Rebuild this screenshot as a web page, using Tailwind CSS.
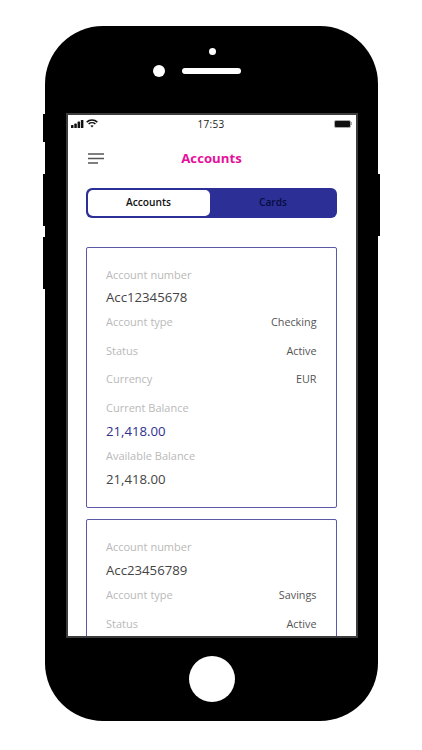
<!DOCTYPE html>
<html lang="en">
<head>
    <meta charset="UTF-8">
    <meta name="viewport" content="width=device-width, initial-scale=1.0">
    <title>Accounts</title>
    <script src="https://cdn.jsdelivr.net/npm/@tailwindcss/browser@4"></script>
</head>
<body class="bg-white font-['Open_Sans',sans-serif] overflow-hidden">
    <div class="h-[750px] w-[422px] pt-[26px] pl-[45px]">
        <!-- phone body -->
        <div class="relative w-[333px] h-[695px] bg-black rounded-[58px] pt-[87px] flex flex-col items-center">
            <div class="absolute left-[-2px] top-[88px] w-[2px] h-[28px] bg-black"></div>
            <div class="absolute left-[-2px] top-[148px] w-[2px] h-[52px] bg-black"></div>
            <div class="absolute left-[-2px] top-[211px] w-[2px] h-[52px] bg-black"></div>
            <div class="absolute right-[-2px] top-[148px] w-[2px] h-[62px] bg-black"></div>
            <div class="absolute left-[164px] top-[22px] w-[7px] h-[7px] rounded-full bg-white"></div>
            <div class="absolute left-[108px] top-[39px] w-[12px] h-[12px] rounded-full bg-white"></div>
            <div class="absolute left-[137px] top-[42px] w-[59px] h-[6px] rounded-full bg-white"></div>

            <!-- screen -->
            <div class="w-[292px] h-[525px] bg-white border-2 border-[#3c3c3c] overflow-hidden shrink-0">
                <div class="flex items-center justify-between h-[15px] pl-[3px] pr-[4px] mt-px">
                    <div class="flex items-center gap-[2px] w-[40px]">
                        <svg width="13" height="8" viewBox="0 0 13 8" fill="#111"><rect x="0" y="5" width="2.5" height="3" rx=".6"/><rect x="3.3" y="3.6" width="2.5" height="4.4" rx=".6"/><rect x="6.6" y="1.6" width="2.5" height="6.4" rx=".6"/><rect x="9.9" y="0" width="2.5" height="8" rx=".6"/></svg>
                        <svg width="12" height="9" viewBox="0 0 12 9" fill="none" stroke="#111" stroke-width="1.6"><path d="M.7 3.1C3.6.3 8.4.3 11.3 3.1"/><path d="M2.6 5C4.5 3.3 7.5 3.3 9.4 5"/><path d="M6 8.6 4.4 6.7c.9-.7 2.3-.7 3.2 0z" fill="#111" stroke="none"/></svg>
                    </div>
                    <span class="text-[10px] leading-none font-medium tracking-[0.3px] text-[#222]">17:53</span>
                    <div class="w-[40px] flex justify-end items-center">
                        <div class="w-[17px] h-[8px] rounded-[2px] border border-[#aaa] bg-[#111]"></div>
                        <div class="w-px h-[3px] bg-[#aaa]"></div>
                    </div>
                </div>

                <div class="relative flex items-center justify-center mt-[18px] h-[20px]">
                    <svg class="absolute left-[20px] top-[4px]" width="16" height="11" viewBox="0 0 16 11" fill="none" stroke="#555" stroke-width="1.3"><path d="M0 1h16M0 5.5h16M0 10h10"/></svg>
                    <h1 class="text-[13.2px] font-bold text-[#e5119a]">Accounts</h1>
                </div>

                <div class="flex h-[30px] w-[251px] ml-[18px] mt-[19px] rounded-[6px] bg-[#2b2f96] p-[2px]">
                    <div class="w-[122px] rounded-[5px] bg-white flex items-center justify-center text-[10.2px] font-semibold text-[#111]">Accounts</div>
                    <div class="flex-1 flex items-center justify-center pl-[2px] text-[10.2px] font-semibold text-[#0a0c40]">Cards</div>
                </div>

                <!-- first account -->
                <div class="w-[251px] ml-[18px] mt-[29px] h-[261px] rounded-[2px] border border-[#5b58a6] pt-[18px] pl-[19.5px] pr-[19px]">
                    <p class="text-[11px] leading-[18px] text-[#b9b9b9]">Account number</p>
                    <p class="text-[13.2px] leading-[20px] mt-[3px] text-[#444]">Acc12345678</p>
                    <div class="flex justify-between items-center mt-[5px] h-[20px]">
                        <span class="text-[11px] text-[#b9b9b9]">Account type</span>
                        <span class="text-[10.8px] text-[#555]">Checking</span>
                    </div>
                    <div class="flex justify-between items-center mt-[9px] h-[20px]">
                        <span class="text-[11px] text-[#b9b9b9]">Status</span>
                        <span class="text-[10.8px] text-[#555]">Active</span>
                    </div>
                    <div class="flex justify-between items-center mt-[8px] h-[20px]">
                        <span class="text-[11px] text-[#b9b9b9]">Currency</span>
                        <span class="text-[10.8px] text-[#555]">EUR</span>
                    </div>
                    <p class="text-[11px] leading-[18px] mt-[10px] text-[#b9b9b9]">Current Balance</p>
                    <p class="text-[13.2px] leading-[20px] mt-[4px] text-[#2f2f8f]">21,418.00</p>
                    <p class="text-[11px] leading-[18px] mt-[6px] text-[#b9b9b9]">Available Balance</p>
                    <p class="text-[13.2px] leading-[20px] mt-[4px] text-[#444]">21,418.00</p>
                </div>

                <!-- second account -->
                <div class="w-[251px] ml-[18px] mt-[11px] h-[261px] rounded-[2px] border border-[#5b58a6] pt-[18px] pl-[19.5px] pr-[19px]">
                    <p class="text-[11px] leading-[18px] text-[#b9b9b9]">Account number</p>
                    <p class="text-[13.2px] leading-[20px] mt-[4px] text-[#444]">Acc23456789</p>
                    <div class="flex justify-between items-center mt-[5px] h-[20px]">
                        <span class="text-[11px] text-[#b9b9b9]">Account type</span>
                        <span class="text-[10.8px] text-[#555]">Savings</span>
                    </div>
                    <div class="flex justify-between items-center mt-[9px] h-[20px]">
                        <span class="text-[11px] text-[#b9b9b9]">Status</span>
                        <span class="text-[10.8px] text-[#555]">Active</span>
                    </div>
                </div>
            </div>

            <!-- home button -->
            <div class="mt-[18px] w-[46px] h-[46px] rounded-full bg-white shrink-0"></div>
        </div>
    </div>
</body>
</html>
